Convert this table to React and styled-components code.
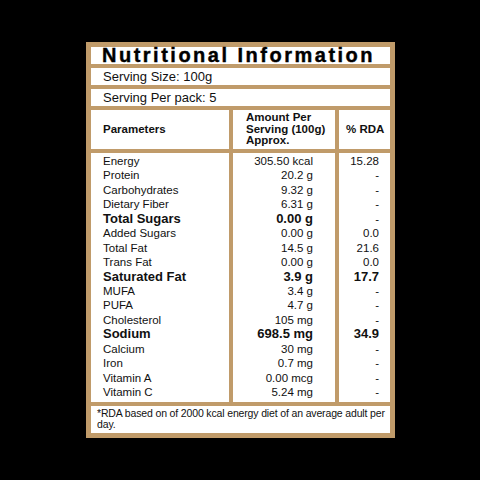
import React from "react";
import styled, { createGlobalStyle } from "styled-components";

const GlobalStyle = createGlobalStyle`
  html, body {
    margin: 0;
    padding: 0;
    background: #000;
  }
  body {
    font-family: "Liberation Sans", Arial, sans-serif;
    color: #111;
  }
`;

const Page = styled.div`
  width: 480px;
  height: 480px;
  box-sizing: border-box;
  padding: 42px 0 0 86px;
  background: #000;
`;

const Frame = styled.div`
  display: inline-block;
  padding: 1px;
  background: #c09b6a;
`;

const Table = styled.table`
  border-collapse: separate;
  border-spacing: 4px;
  table-layout: fixed;
  width: 307px;
`;

const Cell = styled.td`
  background: #fff;
  padding: ${(p) => p.$pad || "0 12px"};
  height: ${(p) => p.$h}px;
  vertical-align: ${(p) => p.$valign || "middle"};
  text-align: ${(p) => p.$align || "left"};
  box-sizing: border-box;
`;

const Title = styled.div`
  font-size: 20px;
  font-weight: bold;
  letter-spacing: 2.5px;
  line-height: 17px;
  color: #000;
  white-space: nowrap;
  -webkit-text-stroke: 0.4px #000;
`;

const Serving = styled.div`
  font-size: 13px;
  line-height: 17px;
`;

const HeadText = styled.div`
  font-size: 11.5px;
  font-weight: bold;
  line-height: 11.5px;
`;

const Line = styled.div`
  height: 14.44px;
  line-height: 14.44px;
  font-size: ${(p) => (p.$bold ? "13px" : "11.5px")};
  font-weight: ${(p) => (p.$bold ? "bold" : "normal")};
  white-space: nowrap;
`;

const Note = styled.div`
  font-size: 10.5px;
  letter-spacing: -0.15px;
  line-height: 11px;
  white-space: nowrap;
`;

const rows = [
  ["Energy", "305.50 kcal", "15.28"],
  ["Protein", "20.2 g", "-"],
  ["Carbohydrates", "9.32 g", "-"],
  ["Dietary Fiber", "6.31 g", "-"],
  ["Total Sugars", "0.00 g", "-", true],
  ["Added Sugars", "0.00 g", "0.0"],
  ["Total Fat", "14.5 g", "21.6"],
  ["Trans Fat", "0.00 g", "0.0"],
  ["Saturated Fat", "3.9 g", "17.7", true],
  ["MUFA", "3.4 g", "-"],
  ["PUFA", "4.7 g", "-"],
  ["Cholesterol", "105 mg", "-"],
  ["Sodium", "698.5 mg", "34.9", true],
  ["Calcium", "30 mg", "-"],
  ["Iron", "0.7 mg", "-"],
  ["Vitamin A", "0.00 mcg", "-"],
  ["Vitamin C", "5.24 mg", "-"],
];

export default function App() {
  return (
    <Page>
      <GlobalStyle />
      <Frame>
        <Table>
          <colgroup>
            <col style={{ width: 138 }} />
            <col style={{ width: 102 }} />
            <col style={{ width: 51 }} />
          </colgroup>
          <tbody>
            <tr>
              <Cell colSpan={3} $h={17} $pad="0 0 0 11px">
                <Title>Nutritional Information</Title>
              </Cell>
            </tr>
            <tr>
              <Cell colSpan={3} $h={17}>
                <Serving>Serving Size: 100g</Serving>
              </Cell>
            </tr>
            <tr>
              <Cell colSpan={3} $h={17}>
                <Serving>Serving Per pack: 5</Serving>
              </Cell>
            </tr>
            <tr>
              <Cell $h={39}>
                <HeadText>Parameters</HeadText>
              </Cell>
              <Cell $h={39} $pad="0 4px 0 13px">
                <HeadText>
                  Amount Per
                  <br />
                  Serving (100g)
                  <br />
                  Approx.
                </HeadText>
              </Cell>
              <Cell $h={39} $pad="0 0 0 7px">
                <HeadText>% RDA</HeadText>
              </Cell>
            </tr>
            <tr>
              <Cell $valign="top" $pad="1px 0 3px 12px">
                {rows.map((r) => (
                  <Line key={r[0]} $bold={r[3]}>
                    {r[0]}
                  </Line>
                ))}
              </Cell>
              <Cell $valign="top" $align="right" $pad="1px 22px 3px 0">
                {rows.map((r) => (
                  <Line key={r[0]} $bold={r[3]}>
                    {r[1]}
                  </Line>
                ))}
              </Cell>
              <Cell $valign="top" $align="right" $pad="1px 11px 3px 0">
                {rows.map((r) => (
                  <Line key={r[0]} $bold={r[3] && r[2] !== "-"}>
                    {r[2]}
                  </Line>
                ))}
              </Cell>
            </tr>
            <tr>
              <Cell colSpan={3} $h={27} $pad="1px 2px 2px 6px">
                <Note>
                  *RDA based on of 2000 kcal energy diet of an average adult per
                  <br />
                  day.
                </Note>
              </Cell>
            </tr>
          </tbody>
        </Table>
      </Frame>
    </Page>
  );
}
